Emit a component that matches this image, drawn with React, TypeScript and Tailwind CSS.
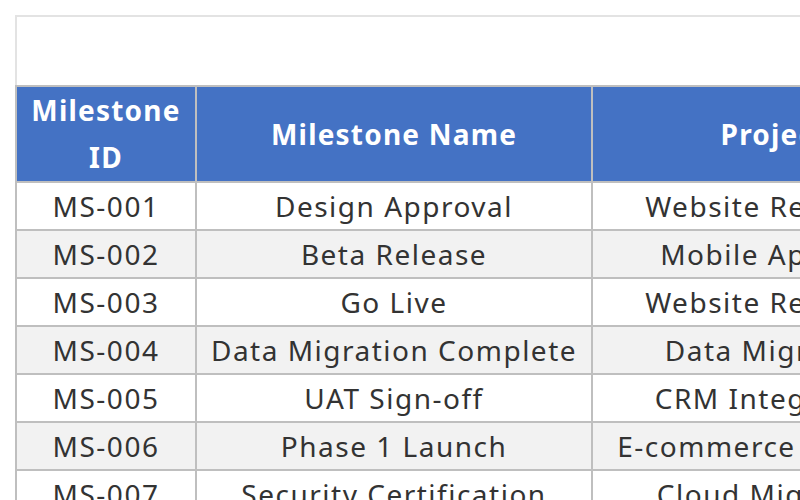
import React from "react";

const rows = [
  ["MS-001", "Design Approval", "Website Redesign"],
  ["MS-002", "Beta Release", "Mobile App Dev"],
  ["MS-003", "Go Live", "Website Redesign"],
  ["MS-004", "Data Migration Complete", "Data Migration"],
  ["MS-005", "UAT Sign-off", "CRM Integration"],
  ["MS-006", "Phase 1 Launch", "E-commerce Platform"],
  ["MS-007", "Security Certification", "Cloud Migration"],
];

export default function App() {
  return (
    <div
      className="w-[800px] h-[500px] overflow-hidden bg-white pt-[15px] pl-[15px]"
      style={{ fontFamily: '"Noto Sans", "Open Sans", sans-serif' }}
    >
      <div className="w-[1000px]">
        <div className="h-[70px] border-t-2 border-l-2 border-[#e3e3e3]" />
        <div className="border-t-2 border-l-2 border-[#bfbfbf] text-[#333333]">
          <div className="flex bg-[#4472c4] text-white font-bold text-[28px] leading-[47px] tracking-[1.2px]">
            <div className="w-[180px] h-[96px] border-r-2 border-b-2 border-[#bfbfbf] flex flex-col items-center justify-center text-center">
              <span>Milestone</span>
              <span>ID</span>
            </div>
            <div className="w-[396px] h-[96px] border-r-2 border-b-2 border-[#bfbfbf] flex items-center justify-center">
              Milestone Name
            </div>
            <div className="w-[364px] h-[96px] border-r-2 border-b-2 border-[#bfbfbf] flex items-center justify-center">
              Project
            </div>
          </div>
          {rows.map((r, i) => (
            <div
              key={r[0]}
              className={`flex text-[28px] leading-[46px] tracking-[1.5px] ${i % 2 === 1 ? "bg-[#f2f2f2]" : "bg-white"}`}
            >
              <div className="w-[180px] h-[48px] border-r-2 border-b-2 border-[#bfbfbf] text-center whitespace-nowrap">
                {r[0]}
              </div>
              <div className="w-[396px] h-[48px] border-r-2 border-b-2 border-[#bfbfbf] text-center whitespace-nowrap">
                {r[1]}
              </div>
              <div className="w-[364px] h-[48px] border-r-2 border-b-2 border-[#bfbfbf] text-center whitespace-nowrap">
                {r[2]}
              </div>
            </div>
          ))}
        </div>
      </div>
    </div>
  );
}
